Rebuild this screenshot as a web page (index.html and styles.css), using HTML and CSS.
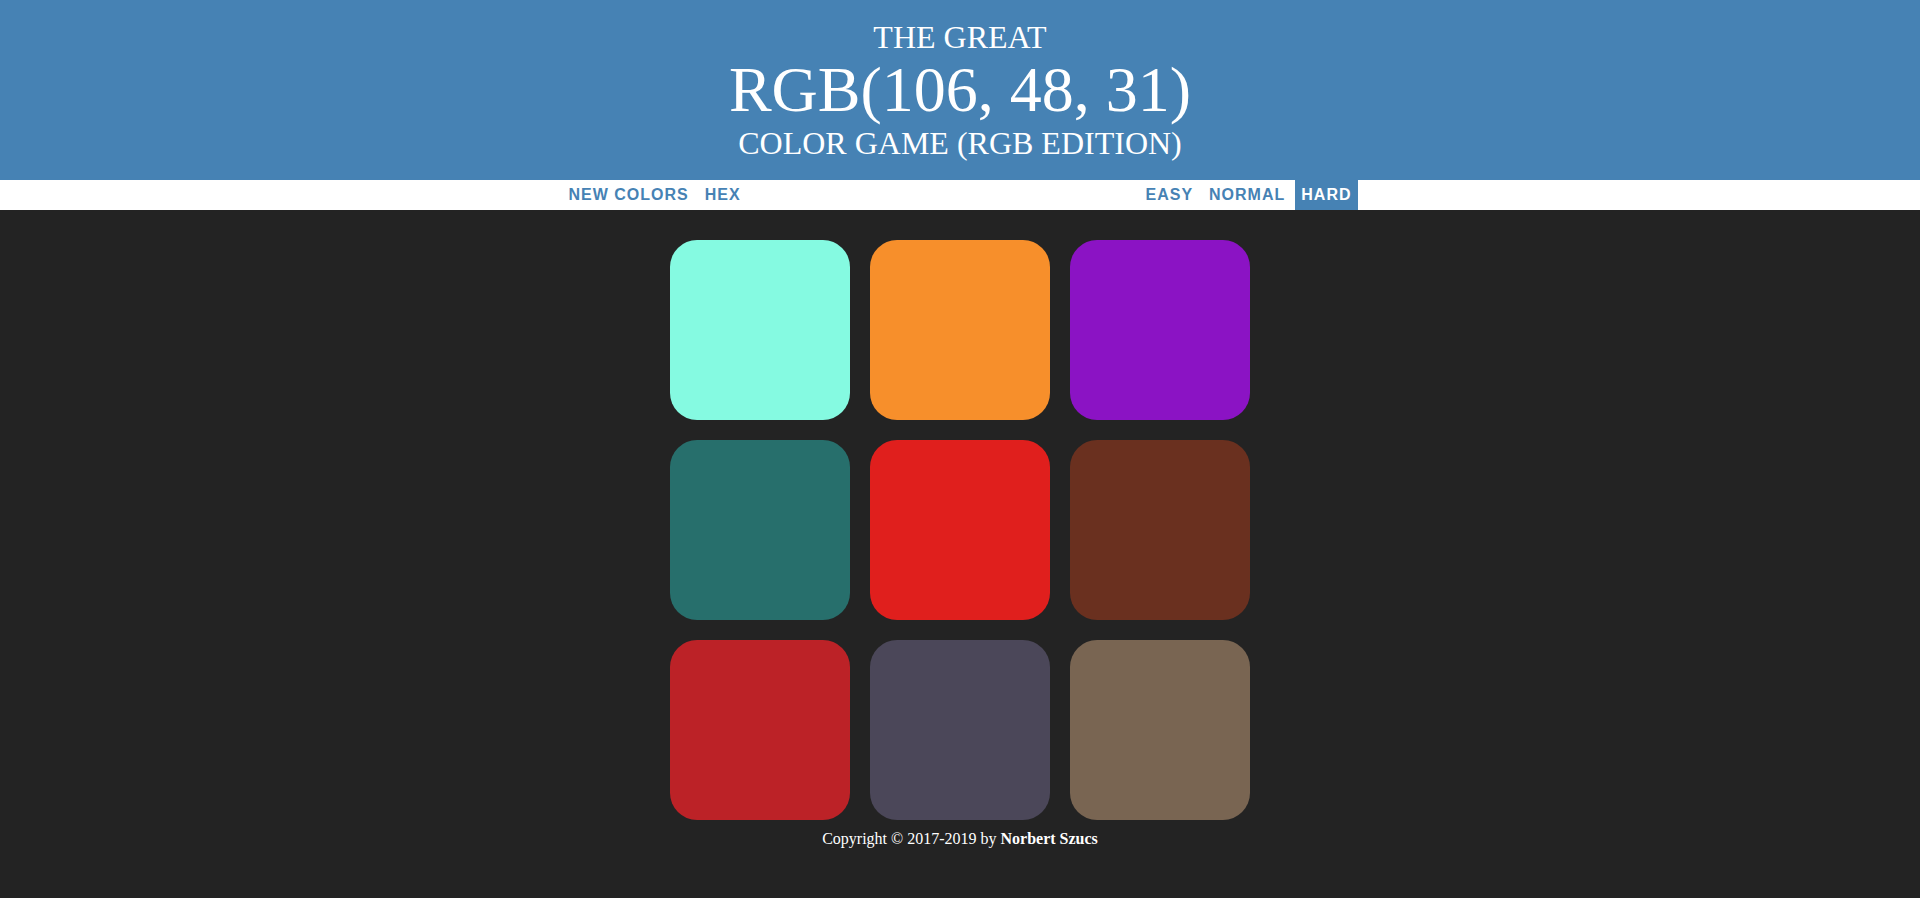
FILE: index.html
```html
<!DOCTYPE html>
<html lang="en">
<head>
<meta charset="utf-8">
<title>Color Game</title>
<link rel="stylesheet" href="styles.css">
</head>
<body>
<h1 class="title">The Great<br><span class="color-display">RGB(106, 48, 31)</span><br>Color Game (RGB Edition)</h1>
<div class="stripe">
  <div class="stripe-inner">
    <div class="group">
      <button class="btn">New Colors</button>
      <button class="btn">Hex</button>
    </div>
    <div class="group">
      <button class="btn">Easy</button>
      <button class="btn">Normal</button>
      <button class="btn selected">Hard</button>
    </div>
  </div>
</div>
<div class="board">
  <div class="square" style="background: rgb(133, 250, 225)"></div>
  <div class="square" style="background: rgb(247, 143, 43)"></div>
  <div class="square" style="background: rgb(139, 19, 196)"></div>
  <div class="square" style="background: rgb(39, 111, 108)"></div>
  <div class="square" style="background: rgb(224, 31, 29)"></div>
  <div class="square" style="background: rgb(106, 48, 31)"></div>
  <div class="square" style="background: rgb(188, 34, 39)"></div>
  <div class="square" style="background: rgb(75, 71, 89)"></div>
  <div class="square" style="background: rgb(121, 101, 82)"></div>
</div>
<footer class="footer">Copyright &copy; 2017-2019 by <b>Norbert Szucs</b></footer>
</body>
</html>
```
FILE: styles.css
```css
html, body {
  margin: 0;
  padding: 0;
}

body {
  background: #232323;
  font-family: "Liberation Serif", "Times New Roman", serif;
  font-size: 16px;
}

.title {
  box-sizing: border-box;
  height: 180px;
  margin: 0;
  padding: 20px 0 0;
  background: #4682b4;
  color: #ffffff;
  font-size: 32px;
  font-weight: normal;
  line-height: 1.1;
  text-align: center;
  text-transform: uppercase;
}

.color-display {
  font-size: 200%;
}

.stripe {
  height: 30px;
  background: #ffffff;
}

.stripe-inner {
  width: 795px;
  height: 100%;
  margin: 0 auto;
  display: flex;
  justify-content: space-between;
}

.group {
  display: flex;
  gap: 4px;
  height: 100%;
}

.btn {
  height: 100%;
  margin: 0;
  padding: 1px 6px;
  border: none;
  background: none;
  color: #4682b4;
  font-family: "Liberation Sans", Arial, sans-serif;
  font-size: 16px;
  font-weight: 700;
  letter-spacing: 1px;
  text-transform: uppercase;
  cursor: pointer;
}

.btn.selected {
  background: #4682b4;
  color: #ffffff;
}

.board {
  width: 600px;
  box-sizing: border-box;
  margin: 20px auto 0;
  padding: 10px;
  display: grid;
  grid-template-columns: repeat(3, 180px);
  grid-auto-rows: 180px;
  gap: 20px;
}

.square {
  border-radius: 27px;
}

.footer {
  color: #ffffff;
  text-align: center;
  font-size: 16px;
}
```
